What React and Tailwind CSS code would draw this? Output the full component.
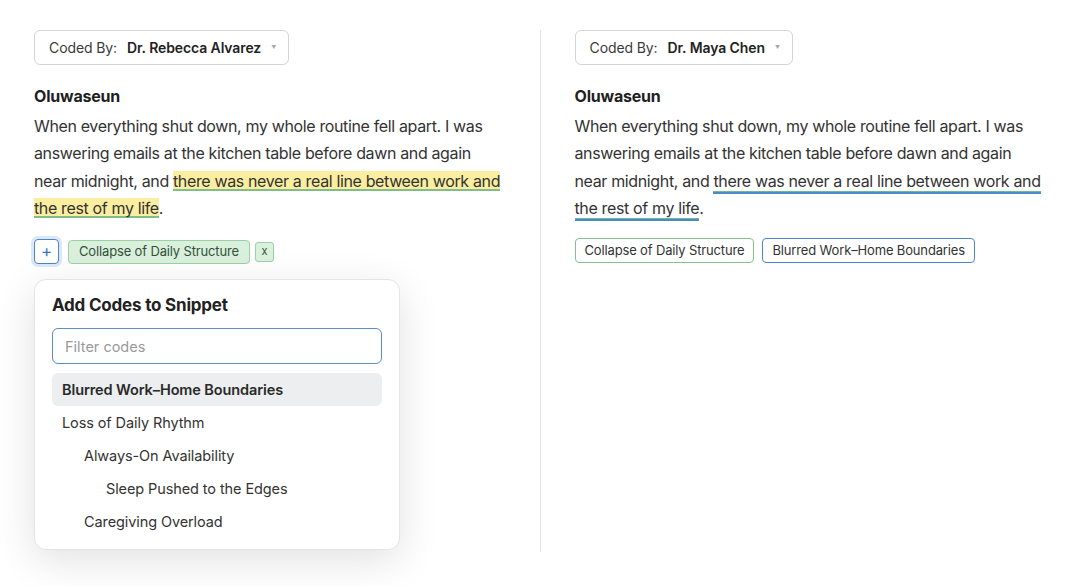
import React from 'react';

const quoteStart =
  'When everything shut down, my whole routine fell apart. I was answering emails at the kitchen table before dawn and again near midnight, and ';
const quoteCoded = 'there was never a real line between work and the rest of my life';

function CoderSelect({ name }) {
  return (
    <button className="inline-flex items-center h-[35px] pl-[14px] pr-[12px] border border-[#d4d4d8] rounded-md bg-white text-[14px] tracking-[-0.1px] text-[#3a3a3a]">
      <span>Coded By:</span>
      <span className="ml-[10px] font-semibold text-[#222]">{name}</span>
      <span className="ml-[10px] text-[5px] text-[#aaa]">▼</span>
    </button>
  );
}

function Quote({ variant }) {
  return (
    <>
      <div className="mt-[19px] text-[16px] leading-[24px] font-bold tracking-[-0.2px] text-[#1f1f1f]">Oluwaseun</div>
      <p className="mt-[5px] text-[16px] leading-[27.3px] tracking-[-0.36px] text-[#333]">
        {quoteStart}
        {variant === 'highlight' ? (
          <span className="bg-[#fbeea0] shadow-[inset_0_-2px_0_#7fbf86]">{quoteCoded}</span>
        ) : (
          <span className="shadow-[0_1px_0_#72b98a,0_3px_0_#4a8bcb]">{quoteCoded}</span>
        )}
        .
      </p>
    </>
  );
}

const codes = [
  { label: 'Blurred Work–Home Boundaries', depth: 0, active: true },
  { label: 'Loss of Daily Rhythm', depth: 0 },
  { label: 'Always-On Availability', depth: 1 },
  { label: 'Sleep Pushed to the Edges', depth: 2 },
  { label: 'Caregiving Overload', depth: 1 },
];

const indent = ['pl-[10px]', 'pl-[32px]', 'pl-[54px]'];

function CodePicker() {
  return (
    <div className="absolute left-0 top-[249px] w-[366px] bg-white border border-[#e4e4e7] rounded-xl shadow-[0_10px_40px_rgba(0,0,0,0.12)] px-[17px] pt-[13px] pb-[11px]">
      <h3 className="text-[17px] leading-[24px] font-bold tracking-[-0.2px] text-[#222]">Add Codes to Snippet</h3>
      <input
        className="mt-[11px] w-full h-[36px] px-[12px] rounded-md border border-[#5b8fc7] text-[14.5px] text-[#333] placeholder:text-[#999] outline-none"
        placeholder="Filter codes"
      />
      <ul className="mt-[9px]">
        {codes.map((c) => (
          <li
            key={c.label}
            className={`h-[33px] flex items-center rounded-md text-[14.5px] tracking-[-0.1px] ${indent[c.depth]} ${
              c.active ? 'bg-[#eceef0] font-semibold text-[#2a2a2a]' : 'text-[#333]'
            }`}
          >
            {c.label}
          </li>
        ))}
      </ul>
    </div>
  );
}

export default function App() {
  return (
    <div className="min-h-screen bg-white font-['Inter',sans-serif] px-[34px] pt-[30px]">
      <div className="flex h-[522px]">
        <div className="relative flex-1 pr-[34px]">
          <CoderSelect name="Dr. Rebecca Alvarez" />
          <Quote variant="highlight" />
          <div className="mt-[17px] flex items-center">
            <button className="w-[25px] h-[25px] flex items-center justify-center rounded-[4px] border border-[#4a86c8] text-[#3a78c0] text-[17px] leading-none ring-[3px] ring-[#dbe8f7] bg-white">
              +
            </button>
            <span className="ml-[9px] h-[24px] px-[10px] flex items-center rounded-[4px] border border-[#9ccfa4] bg-[#d9f0dc] text-[13px] tracking-[-0.15px] text-[#34503a]">
              Collapse of Daily Structure
            </span>
            <button className="ml-[5px] h-[20px] w-[19px] flex items-center justify-center rounded-[3px] border border-[#9ccfa4] bg-[#d9f0dc] text-[11px] text-[#34503a]">
              x
            </button>
          </div>
          <CodePicker />
        </div>
        <div className="w-px bg-[#e5e5e5]" />
        <div className="flex-1 pl-[34px]">
          <CoderSelect name="Dr. Maya Chen" />
          <Quote variant="underline" />
          <div className="mt-[16px] flex items-center gap-[8px]">
            <span className="h-[25px] px-[9px] flex items-center rounded-[4px] border border-[#86bf91] bg-white text-[13px] tracking-[-0.15px] text-[#333]">
              Collapse of Daily Structure
            </span>
            <span className="h-[25px] px-[9px] flex items-center rounded-[4px] border border-[#4a86c8] bg-white text-[13px] tracking-[-0.15px] text-[#333]">
              Blurred Work–Home Boundaries
            </span>
          </div>
        </div>
      </div>
    </div>
  );
}
